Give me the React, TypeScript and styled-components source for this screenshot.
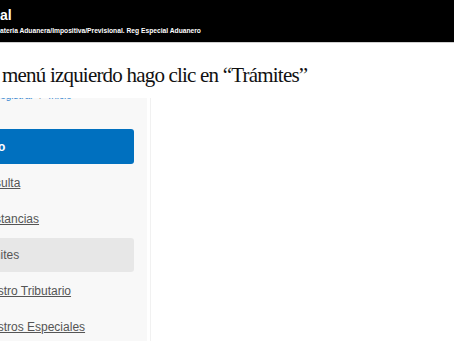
import styled, { createGlobalStyle } from 'styled-components'

const GlobalStyle = createGlobalStyle`
  html, body {
    margin: 0;
    padding: 0;
    background: #ffffff;
    overflow: hidden;
  }

  body {
    width: 454px;
    height: 341px;
  }
`

interface NavItemProps {
  $active?: boolean
}

const menuItems = [
  { label: 'Consulta', active: false },
  { label: 'Constancias', active: false },
  { label: 'Trámites', active: true },
  { label: 'Registro Tributario', active: false },
  { label: 'Registros Especiales', active: false }
]

export default function App (): JSX.Element {
  return (
    <>
      <GlobalStyle />
      <PageStyledContainer>
        <HeaderStyledContainer>
          <h1 className='header-title'>al</h1>
          <p className='header-subtitle'>ateria Aduanera/Impositiva/Previsional. Reg Especial Aduanero</p>
        </HeaderStyledContainer>

        <StepStyledText>menú izquierdo hago clic en “Trámites”</StepStyledText>

        <CaptureStyledContainer>
          <SidebarStyledContainer>
            <BreadcrumbStyledText>
              <a>Registrar</a>
              <span className='divider'>/</span>
              <a>Inicio</a>
            </BreadcrumbStyledText>
            <MenuStyledList>
              <PrimaryStyledButton>Inicio</PrimaryStyledButton>
              {menuItems.map(item => (
                <NavStyledItem key={item.label} $active={item.active}>
                  <a>{item.label}</a>
                </NavStyledItem>
              ))}
            </MenuStyledList>
          </SidebarStyledContainer>
          <MainStyledContainer />
        </CaptureStyledContainer>
      </PageStyledContainer>
    </>
  )
}

const PageStyledContainer = styled.div`
  display: flex;
  flex-direction: column;

  width: 454px;
  height: 341px;
  overflow: hidden;
`

const HeaderStyledContainer = styled.header`
  display: flex;
  flex-direction: column;

  height: 42px;
  border-bottom: 1px solid #cfcfcf;
  box-sizing: content-box;

  background: #000000;
  color: #ffffff;
  font-family: "Liberation Sans", Arial, sans-serif;
  font-weight: 700;

  & > .header-title {
    margin: 7px 0 0 0;
    font-size: 14px;
    line-height: 16px;
  }

  & > .header-subtitle {
    margin: 4px 0 0 0;
    font-size: 6.7px;
    line-height: 8px;
    white-space: nowrap;
  }
`

const StepStyledText = styled.p`
  margin: 20px 0 0 2px;

  font-family: "Liberation Serif", "Times New Roman", serif;
  font-size: 21px;
  letter-spacing: -0.8px;
  color: #111111;
  white-space: nowrap;
`

const CaptureStyledContainer = styled.div`
  display: flex;
  flex-direction: row;
  flex: 1;

  margin-top: 10px;
  overflow: hidden;
`

const SidebarStyledContainer = styled.aside`
  display: flex;
  flex-direction: column;

  width: 187px;
  margin-left: -40px;
  padding-right: 13px;
  box-sizing: border-box;

  background: #f8f8f8;
  font-family: "Liberation Sans", Arial, sans-serif;
`

const BreadcrumbStyledText = styled.div`
  display: flex;
  gap: 6px;

  margin: -8px 0 0 33px;
  font-size: 10px;
  line-height: 12px;
  color: #3b8ad2;
  white-space: nowrap;

  & > .divider {
    color: #8a8a8a;
  }
`

const MenuStyledList = styled.nav`
  display: flex;
  flex-direction: column;
  gap: 2px;

  margin-top: 27px;
`

const PrimaryStyledButton = styled.div`
  display: flex;
  align-items: center;

  height: 35px;
  padding: 0 14px;
  border-radius: 3px;
  box-sizing: border-box;

  background: #0070bf;
  color: #ffffff;
  font-size: 12px;
  font-weight: 700;
`

const NavStyledItem = styled.div<NavItemProps>`
  display: flex;
  align-items: center;

  height: 34px;
  padding: 0 13px;
  border-radius: 3px;

  background: ${({ $active }) => $active ? '#e7e7e7' : 'transparent'};
  font-size: 12px;

  & > a {
    color: #555555;
    text-decoration: ${({ $active }) => $active ? 'none' : 'underline'};
    white-space: nowrap;
  }
`

const MainStyledContainer = styled.main`
  flex: 1;

  margin-left: 3px;
  border-left: 1px solid #f1f1f1;
  background: #ffffff;
`
